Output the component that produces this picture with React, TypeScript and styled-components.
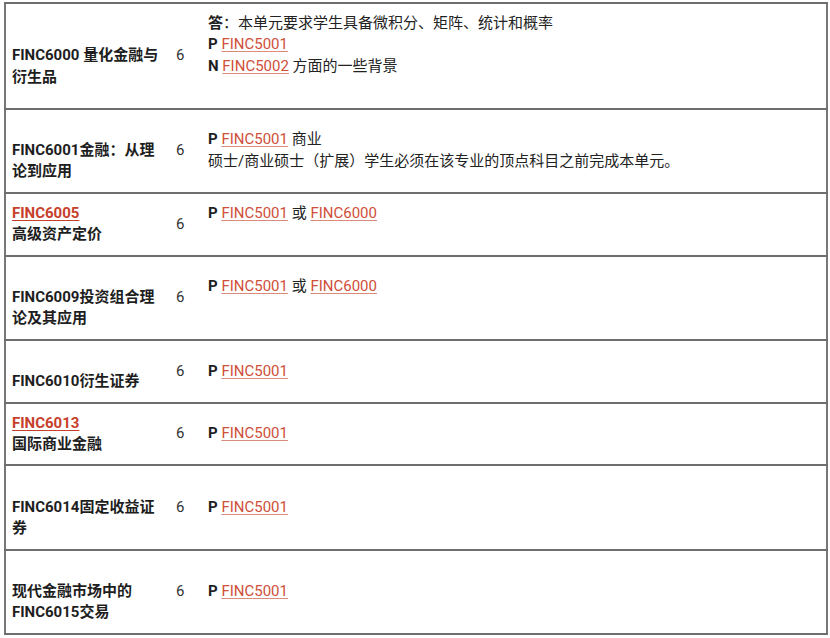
import React from 'react';
import styled, { createGlobalStyle } from 'styled-components';

const GlobalStyle = createGlobalStyle`
  body {
    margin: 0;
    padding: 0;
    background: #ffffff;
    font-family: Roboto, "Noto Sans CJK SC", sans-serif;
    color: #222222;
  }
`;

const Page = styled.div`
  padding: 2px 0 0 4px;
`;

const Table = styled.table`
  width: 824px;
  border-collapse: collapse;
  border-left: 2px solid #777777;
  border-right: 2px solid #777777;
  font-size: 15px;
  line-height: 21.4px;
`;

const Row = styled.tr`
  border-top: 2px solid #6e6e6e;
  border-bottom: 2px solid #6e6e6e;
`;

const Cell = styled.td<{ $w?: number }>`
  vertical-align: middle;
  padding: 9px 6px;
  width: ${(p) => (p.$w ? `${p.$w}px` : 'auto')};
`;

const UnitCell = styled(Cell)`
  font-weight: 700;
  color: #1e1e1e;
`;

const CreditCell = styled(Cell)`
  color: #333333;
  padding-left: 6px;
  padding-right: 0;
`;

const Line = styled.div`
  min-height: 21.4px;
`;

const Link = styled.a<{ $strong?: boolean }>`
  color: ${(p) => (p.$strong ? '#c7402c' : '#cf4f3a')};
  text-decoration: underline;
  text-decoration-color: ${(p) => (p.$strong ? '#c7402c' : '#dc8a7c')};
  text-underline-offset: 2px;
  font-weight: ${(p) => (p.$strong ? 700 : 400)};
`;

const Tag = styled.b`
  font-weight: 700;
  color: #1e1e1e;
`;

type Unit = {
  unit: React.ReactNode[];
  req: React.ReactNode[];
};

const P = ({ children }: { children: React.ReactNode }) => (
  <>
    <Tag>P</Tag> {children}
  </>
);

const L = ({ c }: { c: string }) => <Link href="#">{c}</Link>;

const units: Unit[] = [
  {
    unit: ['', 'FINC6000 量化金融与衍生品'],
    req: [
      <><Tag>答</Tag>：本单元要求学生具备微积分、矩阵、统计和概率</>,
      <P><L c="FINC5001" /></P>,
      <><Tag>N</Tag> <L c="FINC5002" /> 方面的一些背景</>,
      '',
    ],
  },
  {
    unit: ['', 'FINC6001金融：从理论到应用'],
    req: [
      <P><L c="FINC5001" /> 商业</P>,
      '硕士/商业硕士（扩展）学生必须在该专业的顶点科目之前完成本单元。',
    ],
  },
  {
    unit: [<Link href="#" $strong>FINC6005</Link>, '高级资产定价'],
    req: [<P><L c="FINC5001" /> 或 <L c="FINC6000" /></P>, ''],
  },
  {
    unit: ['', 'FINC6009投资组合理论及其应用'],
    req: [<P><L c="FINC5001" /> 或 <L c="FINC6000" /></P>, ''],
  },
  {
    unit: ['', 'FINC6010衍生证券'],
    req: [<P><L c="FINC5001" /></P>],
  },
  {
    unit: [<Link href="#" $strong>FINC6013</Link>, '国际商业金融'],
    req: [<P><L c="FINC5001" /></P>],
  },
  {
    unit: ['', 'FINC6014固定收益证券'],
    req: [<P><L c="FINC5001" /></P>],
  },
  {
    unit: ['', '现代金融市场中的FINC6015交易'],
    req: [<P><L c="FINC5001" /></P>],
  },
];

export default function App() {
  return (
    <>
      <GlobalStyle />
      <Page>
        <Table>
          <tbody>
            {units.map((u, i) => (
              <Row key={i}>
                <UnitCell $w={152}>
                  {u.unit.map((l, j) => (
                    <Line key={j}>{l}</Line>
                  ))}
                </UnitCell>
                <CreditCell $w={26}>6</CreditCell>
                <Cell>
                  {u.req.map((l, j) => (
                    <Line key={j}>{l}</Line>
                  ))}
                </Cell>
              </Row>
            ))}
          </tbody>
        </Table>
      </Page>
    </>
  );
}
